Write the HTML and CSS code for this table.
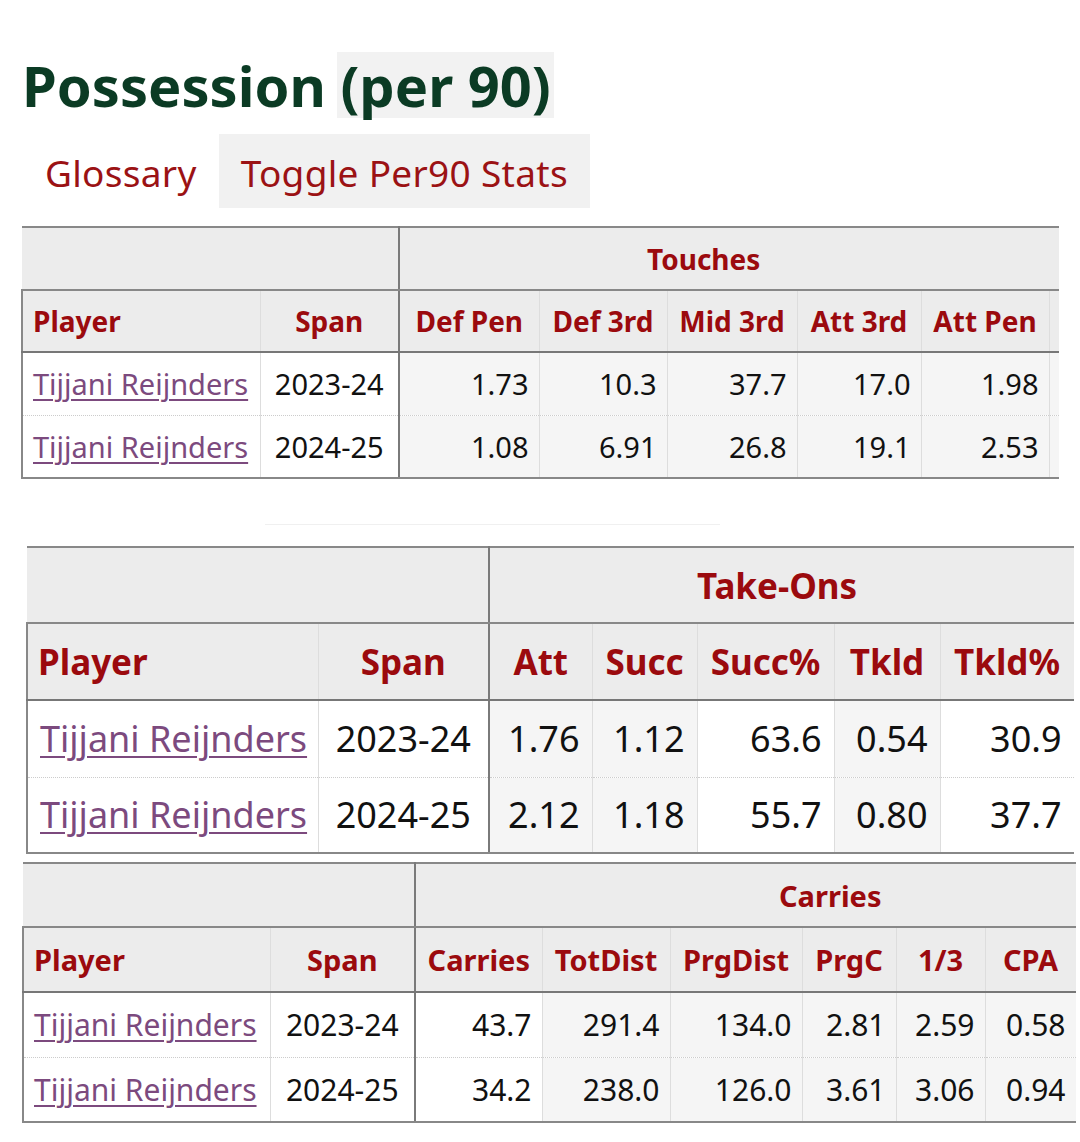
FILE: index.html
```html
<!DOCTYPE html>
<html lang="en">
<head>
<meta charset="utf-8">
<title>Possession (per 90)</title>
<link rel="stylesheet" href="styles.css">
</head>
<body>
<div class="page">
  <h1 class="title">Possession <span class="hl">(per 90)</span></h1>
  <div class="nav">
    <span class="nav-item">Glossary</span>
    <span class="nav-item nav-btn">Toggle Per90 Stats</span>
  </div>

  <div class="wrap w1">
    <table class="stats t1">
      <colgroup>
        <col class="c-player"><col class="c-span"><col class="c-a"><col class="c-b"><col class="c-c"><col class="c-d"><col class="c-e"><col class="c-f">
      </colgroup>
      <thead>
        <tr class="over">
          <th colspan="2" class="blank"></th>
          <th colspan="6" class="group g-touch">Touches</th>
        </tr>
        <tr class="head">
          <th class="left">Player</th>
          <th class="thick">Span</th>
          <th>Def Pen</th>
          <th>Def 3rd</th>
          <th>Mid 3rd</th>
          <th>Att 3rd</th>
          <th>Att Pen</th>
          <th></th>
        </tr>
      </thead>
      <tbody>
        <tr>
          <td class="left"><a href="#">Tijjani Reijnders</a></td>
          <td class="span thick">2023-24</td>
          <td class="num g">1.73</td>
          <td class="num g">10.3</td>
          <td class="num g">37.7</td>
          <td class="num g">17.0</td>
          <td class="num g">1.98</td>
          <td class="num g"></td>
        </tr>
        <tr class="second">
          <td class="left"><a href="#">Tijjani Reijnders</a></td>
          <td class="span thick">2024-25</td>
          <td class="num g">1.08</td>
          <td class="num g">6.91</td>
          <td class="num g">26.8</td>
          <td class="num g">19.1</td>
          <td class="num g">2.53</td>
          <td class="num g"></td>
        </tr>
      </tbody>
    </table>
  </div>

  <div class="sep"></div>

  <div class="wrap w2">
    <table class="stats t2">
      <colgroup>
        <col class="c-player"><col class="c-span"><col class="c-a"><col class="c-b"><col class="c-c"><col class="c-d"><col class="c-e">
      </colgroup>
      <thead>
        <tr class="over">
          <th colspan="2" class="blank"></th>
          <th colspan="5" class="group g-take">Take-Ons</th>
        </tr>
        <tr class="head">
          <th class="left">Player</th>
          <th class="thick">Span</th>
          <th>Att</th>
          <th>Succ</th>
          <th>Succ%</th>
          <th>Tkld</th>
          <th>Tkld%</th>
        </tr>
      </thead>
      <tbody>
        <tr>
          <td class="left"><a href="#">Tijjani Reijnders</a></td>
          <td class="span thick">2023-24</td>
          <td class="num g">1.76</td>
          <td class="num g">1.12</td>
          <td class="num">63.6</td>
          <td class="num g">0.54</td>
          <td class="num">30.9</td>
        </tr>
        <tr class="second">
          <td class="left"><a href="#">Tijjani Reijnders</a></td>
          <td class="span thick">2024-25</td>
          <td class="num g">2.12</td>
          <td class="num g">1.18</td>
          <td class="num">55.7</td>
          <td class="num g">0.80</td>
          <td class="num">37.7</td>
        </tr>
      </tbody>
    </table>
  </div>

  <div class="wrap w3">
    <table class="stats t3">
      <colgroup>
        <col class="c-player"><col class="c-span"><col class="c-a"><col class="c-b"><col class="c-c"><col class="c-d"><col class="c-e"><col class="c-f">
      </colgroup>
      <thead>
        <tr class="over">
          <th colspan="2" class="blank"></th>
          <th colspan="6" class="group g-carry">Carries</th>
        </tr>
        <tr class="head">
          <th class="left">Player</th>
          <th class="thick">Span</th>
          <th>Carries</th>
          <th>TotDist</th>
          <th>PrgDist</th>
          <th>PrgC</th>
          <th>1/3</th>
          <th>CPA</th>
        </tr>
      </thead>
      <tbody>
        <tr>
          <td class="left"><a href="#">Tijjani Reijnders</a></td>
          <td class="span thick">2023-24</td>
          <td class="num">43.7</td>
          <td class="num g">291.4</td>
          <td class="num g">134.0</td>
          <td class="num g">2.81</td>
          <td class="num g">2.59</td>
          <td class="num g">0.58</td>
        </tr>
        <tr class="second">
          <td class="left"><a href="#">Tijjani Reijnders</a></td>
          <td class="span thick">2024-25</td>
          <td class="num">34.2</td>
          <td class="num g">238.0</td>
          <td class="num g">126.0</td>
          <td class="num g">3.61</td>
          <td class="num g">3.06</td>
          <td class="num g">0.94</td>
        </tr>
      </tbody>
    </table>
  </div>
</div>
</body>
</html>
```

FILE: styles.css
```css
html, body {
  margin: 0;
  padding: 0;
  background: #ffffff;
}

body {
  font-family: "Noto Sans", "Open Sans", sans-serif;
  color: #111111;
}

.page {
  padding-top: 52px;
}

.title {
  margin: 0 0 0 22px;
  font-size: 56px;
  font-weight: 700;
  line-height: 66px;
  height: 66px;
  color: #0b3b24;
}

.hl {
  display: inline-block;
  background: #f2f2f2;
  padding: 0 3px;
  margin-left: -3px;
}

.nav {
  display: flex;
  margin: 16px 0 0 22px;
  height: 74px;
}

.nav-item {
  display: block;
  font-size: 37px;
  line-height: 78px;
  padding: 0 22px 0 23px;
  color: #9b1214;
  letter-spacing: 0.3px;
}

.nav-btn {
  background: #f1f1f1;
  padding: 0 22px;
}

.wrap {
  overflow: hidden;
}

.stats {
  border-collapse: collapse;
  table-layout: fixed;
}

.stats th,
.stats td {
  padding: 0 10px;
  white-space: nowrap;
  overflow: hidden;
  border-left: 1px solid #dddddd;
  border-right: 1px solid #dddddd;
}

.stats th {
  background: #ececec;
  color: #9b0a0e;
  font-weight: 700;
  text-align: center;
}

.stats th.left,
.stats td.left {
  text-align: left;
  border-left: 2px solid #888888;
}

.stats .thick {
  border-right: 2px solid #7a7a7a;
}

.stats tr.over th {
  border-top: 2px solid #888888;
  border-bottom: 2px solid #888888;
  border-left: none;
  border-right: none;
}

.stats tr.over th.blank {
  border-right: 2px solid #7a7a7a;
}

.stats tr.head th {
  border-bottom: 2px solid #777777;
}

.stats td {
  background: #ffffff;
}

.stats td.g {
  background: #f5f5f5;
}

.stats td.num {
  text-align: right;
}

.stats td.span {
  text-align: center;
}

.stats tbody tr:last-child td {
  border-bottom: 2px solid #888888;
}

.stats tr.second td {
  border-top: 1px dotted #cccccc;
}

.stats a {
  color: #7c4a7e;
  text-decoration: underline;
  text-decoration-thickness: 2px;
  text-underline-offset: 4px;
}

.group {
  text-align: left !important;
}

/* Table 1: Touches */
.w1 {
  margin: 18px 0 0 21px;
  width: 1038px;
}

.t1 {
  width: 1127px;
  font-size: 29px;
}

.t1 .c-player { width: 238px; }
.t1 .c-span { width: 139px; }
.t1 .c-a { width: 140px; }
.t1 .c-b { width: 128px; }
.t1 .c-c { width: 130px; }
.t1 .c-d { width: 124px; }
.t1 .c-e { width: 128px; }
.t1 .c-f { width: 100px; }

.t1 tr.over { height: 63px; }
.t1 tr.head { height: 62px; }
.t1 tbody tr { height: 63px; }

.t1 .g-touch { padding-left: 247px; }
.t1 th { font-size: 28px; }

.sep {
  margin: 45px 0 0 265px;
  width: 455px;
  height: 1px;
  background: #f0f0f0;
}

/* Table 2: Take-Ons */
.w2 {
  margin: 21px 0 0 26px;
  width: 1048px;
}

.t2 {
  width: 1047px;
  font-size: 36px;
}

.t2 .c-player { width: 291px; }
.t2 .c-span { width: 171px; }
.t2 .c-a { width: 103px; }
.t2 .c-b { width: 105px; }
.t2 .c-c { width: 137px; }
.t2 .c-d { width: 106px; }
.t2 .c-e { width: 134px; }

.t2 tr.over { height: 76px; }
.t2 tr.head { height: 77px; }
.t2 tbody tr { height: 77px; }
.t2 tbody tr.second { height: 76px; }

.t2 th { font-size: 35px; }
.t2 .g-take { padding-left: 207px; }
.t2 td.num { padding-right: 12px; }
.t2 td.left { padding-left: 12px; }

/* Table 3: Carries */
.w3 {
  margin: 8px 0 0 22px;
  width: 1054px;
}

.t3 {
  width: 1053px;
  font-size: 30px;
}

.t3 .c-player { width: 247px; }
.t3 .c-span { width: 145px; }
.t3 .c-a { width: 127px; }
.t3 .c-b { width: 128px; }
.t3 .c-c { width: 132px; }
.t3 .c-d { width: 94px; }
.t3 .c-e { width: 89px; }
.t3 .c-f { width: 91px; }

.t3 tr.over { height: 64px; }
.t3 tr.head { height: 65px; }
.t3 tbody tr { height: 65px; }

.t3 th { font-size: 29px; }
.t3 .g-carry { padding-left: 363px; }
```
